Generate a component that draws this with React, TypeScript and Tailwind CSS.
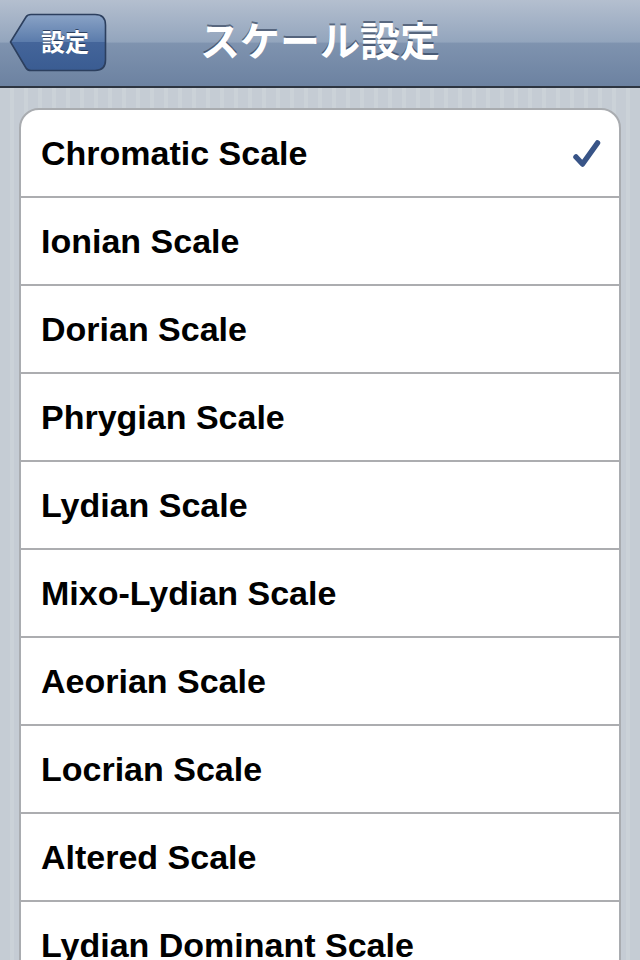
import React from "react";

const scales = [
  "Chromatic Scale",
  "Ionian Scale",
  "Dorian Scale",
  "Phrygian Scale",
  "Lydian Scale",
  "Mixo-Lydian Scale",
  "Aeorian Scale",
  "Locrian Scale",
  "Altered Scale",
  "Lydian Dominant Scale",
  "Whole Tone Scale",
];

function BackButton() {
  return (
    <button className="relative w-[98px] h-[60px] ml-[9px] shrink-0">
      <svg width="98" height="60" viewBox="0 0 98 60" className="absolute inset-0">
        <defs>
          <linearGradient id="bb" x1="0" y1="0" x2="0" y2="1">
            <stop offset="0" stopColor="#8aa3c6" />
            <stop offset="0.5" stopColor="#5a7bab" />
            <stop offset="0.5" stopColor="#44659a" />
            <stop offset="1" stopColor="#3a5c92" />
          </linearGradient>
        </defs>
        <path
          d="M1.5 29 L17 4 Q18.5 1.5 22 1.5 L86 1.5 Q96.5 1.5 96.5 12 L96.5 47 Q96.5 57.5 86 57.5 L22 57.5 Q18.5 57.5 17 55 Z"
          fill="url(#bb)"
          stroke="#2c3f5e"
          strokeWidth="1.6"
        />
      </svg>
      <span
        className="relative block text-white font-bold text-[24px] leading-none pl-[14px] pb-[4px] [text-shadow:0_-1px_0_rgba(20,35,60,0.7)]"
        style={{ fontFamily: '"Noto Sans CJK JP", sans-serif' }}
      >
        設定
      </span>
    </button>
  );
}

export default function App() {
  return (
    <div className="w-[640px] h-[960px] overflow-hidden bg-[repeating-linear-gradient(90deg,#c5ccd4_0px,#c5ccd4_10px,#cbd2d8_10px,#cbd2d8_14px)]">
      <div className="relative h-[88px] flex items-center border-b-2 border-[#2d3541] bg-[linear-gradient(180deg,#b4bfcf_0%,#93a5bd_49%,#7f93af_50%,#6c82a1_100%)]">
        <BackButton />
        <div className="absolute inset-x-0 top-0 h-[86px] flex items-center justify-center pointer-events-none">
          <span
            className="text-white font-bold text-[40px] leading-none pb-[8px] [text-shadow:0_-2px_0_rgba(40,55,80,0.6)]"
            style={{ fontFamily: '"Noto Sans CJK JP", sans-serif' }}
          >
            スケール設定
          </span>
        </div>
      </div>
      <div className="px-[19px] pt-[20px]">
        <div className="bg-white border-2 border-[#a9acb0] rounded-[20px] overflow-hidden">
          {scales.map((s, i) => (
            <div
              key={s}
              className={
                i === 0
                  ? "h-[86px] flex items-center justify-between pl-[20px] pr-[17px]"
                  : "h-[88px] flex items-center justify-between pl-[20px] pr-[17px] border-t-2 border-[#acadb0]"
              }
            >
              <span
                className="text-black font-bold text-[34px] leading-none"
                style={{ fontFamily: '"Liberation Sans", Arial, sans-serif' }}
              >
                {s}
              </span>
              {i === 0 && (
                <svg width="30" height="30" viewBox="0 0 30 30">
                  <path
                    d="M4 19 L10.5 26 L25.5 5"
                    fill="none"
                    stroke="#385487"
                    strokeWidth="5.5"
                    strokeLinecap="round"
                    strokeLinejoin="round"
                  />
                </svg>
              )}
            </div>
          ))}
        </div>
      </div>
    </div>
  );
}
